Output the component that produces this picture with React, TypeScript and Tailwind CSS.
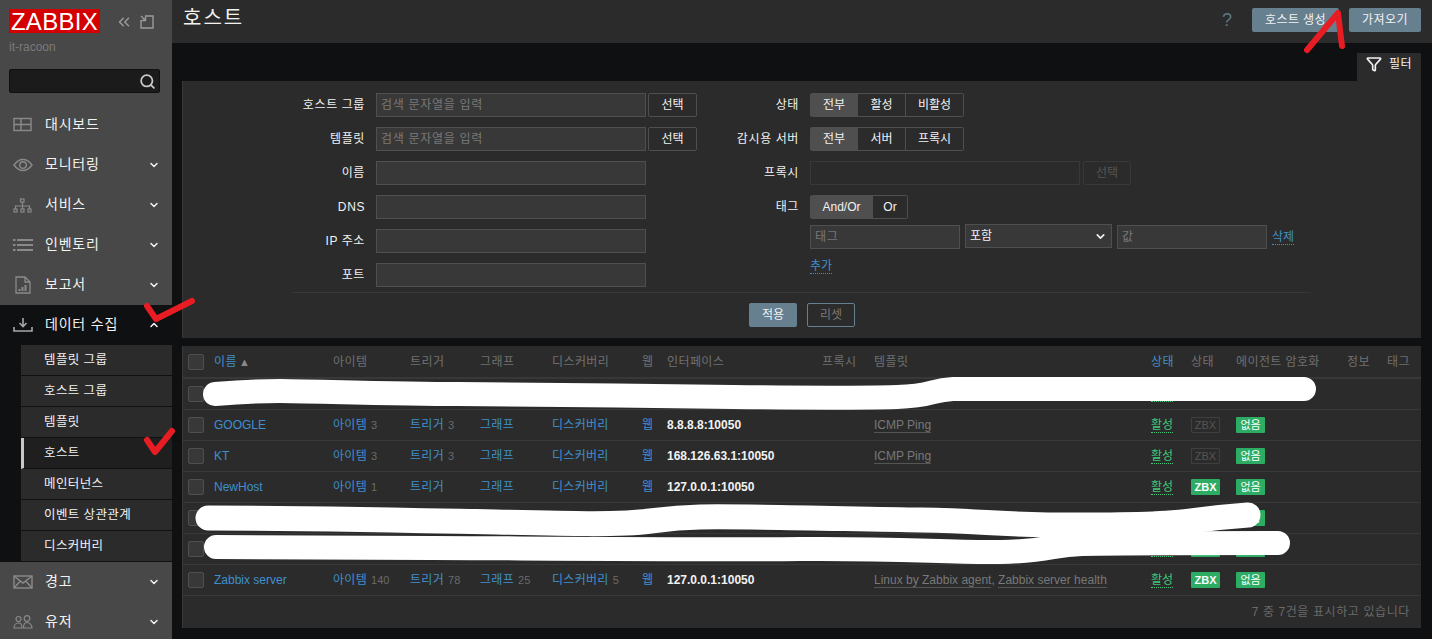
import React from 'react';
import { ChevronDown, ChevronUp, ChevronsLeft, Funnel, Search } from 'lucide-react';

const font = "font-['Liberation_Sans','Noto_Sans_CJK_KR',sans-serif]";

const DashIcon = () => (
  <svg width="20" height="16" viewBox="0 0 20 16" fill="none" stroke="#8a8a8a" strokeWidth="1.4">
    <rect x="1" y="1.500" width="17" height="12" />
    <path d="M1 7.500h17M8 7.500v6M8 1.500v6" />
  </svg>
);
const EyeIcon = () => (
  <svg width="20" height="14" viewBox="0 0 20 14" fill="none" stroke="#8a8a8a" strokeWidth="1.4">
    <path d="M1 7c2.500-3.500 5.500-5.500 9-5.500S16.500 3.500 19 7c-2.500 3.500-5.500 5.500-9 5.500S3.500 10.500 1 7z" />
    <circle cx="10" cy="7" r="3.300" />
  </svg>
);
const TreeIcon = () => (
  <svg width="19" height="15" viewBox="0 0 19 15" fill="none" stroke="#8a8a8a" strokeWidth="1.200">
    <rect x="7.500" y="1" width="3.500" height="3" />
    <rect x="1" y="11" width="3" height="3" />
    <rect x="8" y="11" width="3" height="3" />
    <rect x="15" y="11" width="3" height="3" />
    <path d="M9.500 4v7M2.500 11V8h14v3" />
  </svg>
);
const ListIcon = () => (
  <svg width="20" height="12" viewBox="0 0 20 12" fill="#8a8a8a">
    <rect x="0" y="0" width="2.500" height="2" />
    <rect x="4" y="0" width="16" height="2" />
    <rect x="0" y="5" width="2.500" height="2" />
    <rect x="4" y="5" width="16" height="2" />
    <rect x="0" y="10" width="2.500" height="2" />
    <rect x="4" y="10" width="16" height="2" />
  </svg>
);
const ReportIcon = () => (
  <svg width="16" height="18" viewBox="0 0 16 18" fill="none" stroke="#8a8a8a" strokeWidth="1.300">
    <path d="M1 1h9l5 5v11H1zM10 1v5h5" />
    <path d="M4.500 15v-2M7.500 15v-4M10.500 15V9" strokeWidth="2" />
  </svg>
);
const DownloadIcon = () => (
  <svg width="20" height="14" viewBox="0 0 20 14" fill="none" stroke="#a8a8a8" strokeWidth="1.600">
    <path d="M10 0v8M6.500 5l3.500 3.500L13.500 5" />
    <path d="M1 9v4h18V9" />
  </svg>
);
const MailIcon = () => (
  <svg width="20" height="14" viewBox="0 0 20 14" fill="none" stroke="#8a8a8a" strokeWidth="1.400">
    <rect x="1" y="1" width="18" height="12" />
    <path d="M1 1l9 7 9-7M1 13l6-6.500M19 13l-6-6.500" />
  </svg>
);
const UsersIcon = () => (
  <svg width="20" height="14" viewBox="0 0 20 14" fill="none" stroke="#8a8a8a" strokeWidth="1.200">
    <circle cx="5.500" cy="4" r="2.500" />
    <circle cx="14" cy="3.500" r="2.800" />
    <path d="M1 13c0-3 2-5 4.500-5S9 10 9 13zM10.500 13c0-3 1-5.500 3.500-5.500s5 2.500 5 5.500z" />
  </svg>
);
const KioskIcon = () => (
  <svg width="14" height="14" viewBox="0 0 14 14" fill="none" stroke="#9a9a9a" strokeWidth="1.400">
    <path d="M5 1h8v12H1V5" />
    <path d="M1 1l4.500 4.500M1.500 5.500h4v-4" />
  </svg>
);

const NavItem = ({ icon, label, open, hasChevron = true }: { icon: React.ReactNode; label: string; open?: boolean; hasChevron?: boolean }) => (
  <div className={`h-10 shrink-0 flex items-center pl-[12px] pr-[12px] ${open ? 'bg-[#0e1012]' : ''}`}>
    <span className="w-[21px] flex justify-center shrink-0">{icon}</span>
    <span className="ml-[12px] -mt-[2px] text-[14px] tracking-[0.8px] text-[#f2f2f2] flex-1">{label}</span>
    {hasChevron && (open ? <ChevronUp size={12} strokeWidth={3} color="#f2f2f2" /> : <ChevronDown size={12} strokeWidth={3} color="#f2f2f2" />)}
  </div>
);

const subItems = ['템플릿 그룹', '호스트 그룹', '템플릿', '호스트', '메인터넌스', '이벤트 상관관계', '디스커버리'];

const Sidebar = () => (
  <aside className="w-[172px] shrink-0 bg-[#484848] flex flex-col">
    <div className="h-[105px] shrink-0 px-[9px] pt-[9px]">
      <div className="flex items-center">
        <div className="w-[91px] h-[24px] bg-[#d40000] text-white text-[24px] tracking-[0.3px] leading-[25px] text-center font-['Liberation_Sans',sans-serif]">ZABBIX</div>
        <ChevronsLeft size={18} color="#9a9a9a" className="ml-[15px] mt-[1px]" />
        <span className="ml-[7px] mt-[1px]"><KioskIcon /></span>
      </div>
      <div className="text-[#7a7a7a] text-[12px] mt-[7px] leading-[14px]">it-racoon</div>
      <div className="mt-[15px] w-[151px] h-[24px] bg-[#1b1b1b] border border-[#0e1012] rounded-[2px] flex items-center justify-end pr-[3px]">
        <Search size={17} color="#c8c8c8" strokeWidth={2.500} />
      </div>
    </div>
    <NavItem icon={<DashIcon />} label="대시보드" hasChevron={false} />
    <NavItem icon={<EyeIcon />} label="모니터링" />
    <NavItem icon={<TreeIcon />} label="서비스" />
    <NavItem icon={<ListIcon />} label="인벤토리" />
    <NavItem icon={<ReportIcon />} label="보고서" />
    <NavItem icon={<DownloadIcon />} label="데이터 수집" open />
    <div className="bg-[#0e1012] pl-[21px] shrink-0">
      {subItems.map(s => (
        <div
          key={s}
          className={`h-[31px] flex items-center pl-[23px] border-b border-[#111] text-[12.500px] tracking-[0.4px] text-[#f2f2f2] ${s === '호스트' ? 'bg-[#1f1f1f] border-l-[3px] border-l-[#c8c8c8] !pl-[20px]' : 'bg-[#2b2b2b]'}`}
        >
          {s}
        </div>
      ))}
    </div>
    <NavItem icon={<MailIcon />} label="경고" />
    <NavItem icon={<UsersIcon />} label="유저" />
  </aside>
);

const TopBar = () => (
  <header className="h-[43px] bg-[#2b2b2b] flex items-start pl-[11px] pr-[11px] shrink-0">
    <h1 className="text-[20px] tracking-[2px] leading-[36px] font-normal text-[#f2f2f2] flex-1">호스트</h1>
    <span className="text-[#5c7688] text-[18px] leading-[24px] mt-[8px] mr-[20px]">?</span>
    <button className="mt-[8px] h-[24px] w-[87px] bg-[#668090] rounded-[2px] text-[12px] text-[#f2f2f2] tracking-[0.4px]">호스트 생성</button>
    <button className="mt-[8px] ml-[10px] h-[24px] w-[72px] bg-[#668090] rounded-[2px] text-[12px] text-[#f2f2f2] tracking-[0.4px]">가져오기</button>
  </header>
);

const inputCls = 'h-[24px] bg-[#383838] border border-[#4f4f4f] text-[12px] tracking-[0.7px] text-[#787878] px-[4px] flex items-center';
const btnCls = 'h-[24px] w-[49px] bg-[#2b2b2b] border border-[#4f4f4f] rounded-[2px] text-[12px] text-[#f2f2f2] flex items-center justify-center';

const Label = ({ children, width }: { children: React.ReactNode; width: string }) => (
  <span className={`${width} text-right text-[12px] tracking-[0.6px] text-[#f2f2f2] shrink-0`}>{children}</span>
);

const LeftRow = ({ label, placeholder, select }: { label: string; placeholder?: string; select?: boolean }) => (
  <div className="h-[24px] flex items-center">
    <Label width="w-[182px]">{label}</Label>
    <div className={`${inputCls} w-[270px] ml-[11px]`}>{placeholder}</div>
    {select && <button className={`${btnCls} ml-[2px]`}>선택</button>}
  </div>
);

const Segmented = ({ items, widths }: { items: string[]; widths: string[] }) => (
  <div className="flex h-[24px] border border-[#4f4f4f] rounded-[2px] overflow-hidden">
    {items.map((it, i) => (
      <span
        key={it}
        className={`${widths[i]} flex items-center justify-center text-[12px] text-[#f2f2f2] ${i === 0 ? 'bg-[#4f4f4f]' : 'bg-[#2b2b2b] border-l border-[#4f4f4f]'}`}
      >
        {it}
      </span>
    ))}
  </div>
);

const RightRow = ({ label, children }: { label: string; children: React.ReactNode }) => (
  <div className="h-[24px] flex items-center">
    <Label width="w-[99px]">{label}</Label>
    <div className="ml-[11px] flex items-center">{children}</div>
  </div>
);

const DottedLink = ({ children }: { children: React.ReactNode }) => (
  <span className="text-[12px] text-[#3f8fcd] border-b border-dotted border-[#3f8fcd] leading-[14px]">{children}</span>
);

const FilterPanel = () => (
  <section className="bg-[#2b2b2b] border-l border-[#383838] pt-[12px] pb-[11px]">
    <div className="flex">
      <div className="w-[517px] flex flex-col gap-[10px]">
        <LeftRow label="호스트 그룹" placeholder="검색 문자열을 입력" select />
        <LeftRow label="템플릿" placeholder="검색 문자열을 입력" select />
        <LeftRow label="이름" />
        <LeftRow label="DNS" />
        <LeftRow label="IP 주소" />
        <LeftRow label="포트" />
      </div>
      <div className="flex flex-col gap-[10px]">
        <RightRow label="상태"><Segmented items={['전부', '활성', '비활성']} widths={['w-[46px]', 'w-[48px]', 'w-[58px]']} /></RightRow>
        <RightRow label="감시용 서버"><Segmented items={['전부', '서버', '프록시']} widths={['w-[46px]', 'w-[48px]', 'w-[58px]']} /></RightRow>
        <RightRow label="프록시">
          <div className="h-[24px] w-[270px] border border-[#383838] bg-[#2b2b2b]" />
          <button className="ml-[3px] h-[24px] w-[48px] border border-[#383838] rounded-[2px] text-[12px] text-[#555]">선택</button>
        </RightRow>
        <RightRow label="태그"><Segmented items={['And/Or', 'Or']} widths={['w-[61px]', 'w-[35px]']} /></RightRow>
        <div className="ml-[110px] -mt-[4px] flex items-center">
          <div className={`${inputCls} w-[150px]`}>태그</div>
          <div className="ml-[5px] -mt-[2px] h-[24px] w-[147px] bg-[#383838] border border-[#4f4f4f] flex items-center justify-between px-[4px] text-[12px] text-[#f2f2f2]">
            포함
            <ChevronDown size={13} strokeWidth={3} color="#f2f2f2" />
          </div>
          <div className={`${inputCls} w-[150px] ml-[5px]`}>값</div>
          <span className="ml-[5px] -mt-[2px]"><DottedLink>삭제</DottedLink></span>
        </div>
        <div className="ml-[110px] -mt-[2px] leading-[16px]"><DottedLink>추가</DottedLink></div>
      </div>
    </div>
    <div className="ml-[110px] mr-[110px] mt-[5px] border-t border-[#383838] pt-[10px] flex justify-center gap-[10px]">
      <button className="h-[24px] w-[48px] bg-[#668090] rounded-[2px] text-[12px] text-[#f2f2f2]">적용</button>
      <button className="h-[24px] w-[48px] border border-[#668090] rounded-[2px] text-[12px] text-[#787878]">리셋</button>
    </div>
  </section>
);

type Host = {
  name: string; items?: number; triggers?: number; graphs?: number; discovery?: number;
  iface: string; templates: string[]; zbx: boolean; links: boolean; badges?: boolean;
};

const hosts: Host[] = [
  { name: '', iface: '', templates: [], zbx: false, links: false, badges: false },
  { name: 'GOOGLE', items: 3, triggers: 3, iface: '8.8.8.8:10050', templates: ['ICMP Ping'], zbx: false, links: true },
  { name: 'KT', items: 3, triggers: 3, iface: '168.126.63.1:10050', templates: ['ICMP Ping'], zbx: false, links: true },
  { name: 'NewHost', items: 1, iface: '127.0.0.1:10050', templates: [], zbx: true, links: true },
  { name: '', iface: '', templates: [], zbx: true, links: false },
  { name: '', iface: '', templates: [], zbx: true, links: false },
  { name: 'Zabbix server', items: 140, triggers: 78, graphs: 25, discovery: 5, iface: '127.0.0.1:10050', templates: ['Linux by Zabbix agent', 'Zabbix server health'], zbx: true, links: true },
];

const columns = ['이름', '아이템', '트리거', '그래프', '디스커버리', '웹', '인터페이스', '프록시', '템플릿', '상태', '상태', '에이전트 암호화', '정보', '태그'];
const colWidths = ['w-[31px]', 'w-[119px]', 'w-[77px]', 'w-[70px]', 'w-[72px]', 'w-[90px]', 'w-[25px]', 'w-[155px]', 'w-[52px]', 'w-[277px]', 'w-[40px]', 'w-[45px]', 'w-[111px]', 'w-[40px]', 'w-[34px]'];

const Check = () => <div className="w-4 h-4 bg-[#383838] border border-[#4f4f4f] rounded-[2px] ml-[5px]" />;

const CountLink = ({ label, count }: { label: string; count?: number }) => (
  <span className="whitespace-nowrap">
    <span className="text-[#3f8fcd] text-[12px] tracking-[0.3px]">{label}</span>
    {count !== undefined && <span className="text-[#6a6a6a] text-[11px] ml-[4px]">{count}</span>}
  </span>
);

const Badge = ({ on, bold, children }: { on: boolean; bold?: boolean; children: React.ReactNode }) => (
  <span className={`inline-flex items-center justify-center h-[16px] w-[29px] rounded-[1px] text-[11px] ${on ? 'bg-[#2dac64] text-white' : 'border border-[#3f3f3f] text-[#555]'} ${bold ? 'font-bold' : ''}`}>
    {children}
  </span>
);

const HostTable = () => (
  <section className="bg-[#2b2b2b] border-l border-[#383838]">
    <table className="table-fixed w-full border-collapse text-[12px]">
      <colgroup>
        {colWidths.map((w, i) => <col key={i} className={w} />)}
      </colgroup>
      <thead>
        <tr className="h-[32px] border-b-2 border-[#383838]">
          <th className="p-0"><Check /></th>
          {columns.map((c, i) => (
            <th key={i} className={`p-0 text-left font-normal whitespace-nowrap text-[12px] tracking-[0.4px] ${i === 0 || i === 9 ? 'text-[#3f8fcd]' : 'text-[#707070]'}`}>
              {c}
              {i === 0 && <span className="text-[#8a8a8a] text-[11px] ml-[2px]">▲</span>}
            </th>
          ))}
        </tr>
      </thead>
      <tbody>
        {hosts.map((h, idx) => (
          <tr key={idx} className="h-[31px] border-b border-[#383838]">
            <td className="p-0"><Check /></td>
            <td className="p-0 text-[#3f8fcd] whitespace-nowrap">{h.name}</td>
            {h.links ? (
              <>
                <td className="p-0"><CountLink label="아이템" count={h.items} /></td>
                <td className="p-0"><CountLink label="트리거" count={h.triggers} /></td>
                <td className="p-0"><CountLink label="그래프" count={h.graphs} /></td>
                <td className="p-0"><CountLink label="디스커버리" count={h.discovery} /></td>
                <td className="p-0 text-[#3f8fcd]">웹</td>
              </>
            ) : (
              <td className="p-0" colSpan={5} />
            )}
            <td className="p-0 text-[#f2f2f2] font-bold">{h.iface}</td>
            <td className="p-0" />
            <td className="p-0 text-[#787878] whitespace-nowrap">
              {h.templates.map((t, i) => (
                <React.Fragment key={t}>
                  {i > 0 && ', '}
                  <span className="border-b border-[#555]">{t}</span>
                </React.Fragment>
              ))}
            </td>
            <td className="p-0"><span className="text-[#3ec97a] border-b border-dotted border-[#3ec97a] leading-[14px]">활성</span></td>
            <td className="p-0">{h.badges !== false && <Badge on={h.zbx} bold={h.zbx}>ZBX</Badge>}</td>
            <td className="p-0">{h.badges !== false && <Badge on>없음</Badge>}</td>
            <td className="p-0" />
            <td className="p-0" />
          </tr>
        ))}
      </tbody>
    </table>
    <div className="h-[32px] flex items-center justify-end pr-[11px] text-[12px] tracking-[0.6px] text-[#6a6a6a]">7 중 7건을 표시하고 있습니다</div>
  </section>
);

// paint-over marks that were drawn on the screenshot by hand
const Marks = () => (
  <svg className="absolute inset-0 pointer-events-none" width="1432" height="639" viewBox="0 0 1432 639" fill="none" strokeLinecap="round" strokeLinejoin="round">
    <path d="M215 394C240 392 258 391 280 391S400 394 457 394S650 396 733 397S860 398 897 397S930 390 953 389S1100 389 1304 389" stroke="#fff" strokeWidth="24" />
    <path d="M208 518C300 518 400 520 496 522S600 524 627 523S660 518 700 517S850 519 921 520S1000 526 1100 525S1180 520 1248 515" stroke="#fff" strokeWidth="25" />
    <path d="M216 547C300 547 380 548 433 548S700 550 800 549S950 553 1001 552S1050 545 1082 544S1200 543 1278 543" stroke="#fff" strokeWidth="24" />
    <path d="M147 306L156 319L192 301" stroke="#e81c23" strokeWidth="6" />
    <path d="M147 440L155 452L172 431" stroke="#e81c23" strokeWidth="6" />
    <path d="M1307 50L1338 13L1342 46" stroke="#e81c23" strokeWidth="6" />
  </svg>
);

const App = () => (
  <div className={`relative w-[1432px] h-[639px] overflow-hidden flex bg-[#0e1012] ${font}`}>
    <Sidebar />
    <main className="flex-1 flex flex-col">
      <TopBar />
      <div className="h-[38px] flex justify-end items-end pr-[11px] shrink-0">
        <div className="h-[28px] w-[64px] bg-[#2b2b2b] flex items-center justify-center gap-[7px] pb-[6px] text-[12px] tracking-[0.4px] text-[#f2f2f2]">
          <Funnel size={16} color="#f2f2f2" strokeWidth={2.500} />
          필터
        </div>
      </div>
      <div className="pl-[10px] pr-[11px] flex flex-col gap-[8px]">
        <FilterPanel />
        <HostTable />
      </div>
    </main>
    <Marks />
  </div>
);

export default App;
